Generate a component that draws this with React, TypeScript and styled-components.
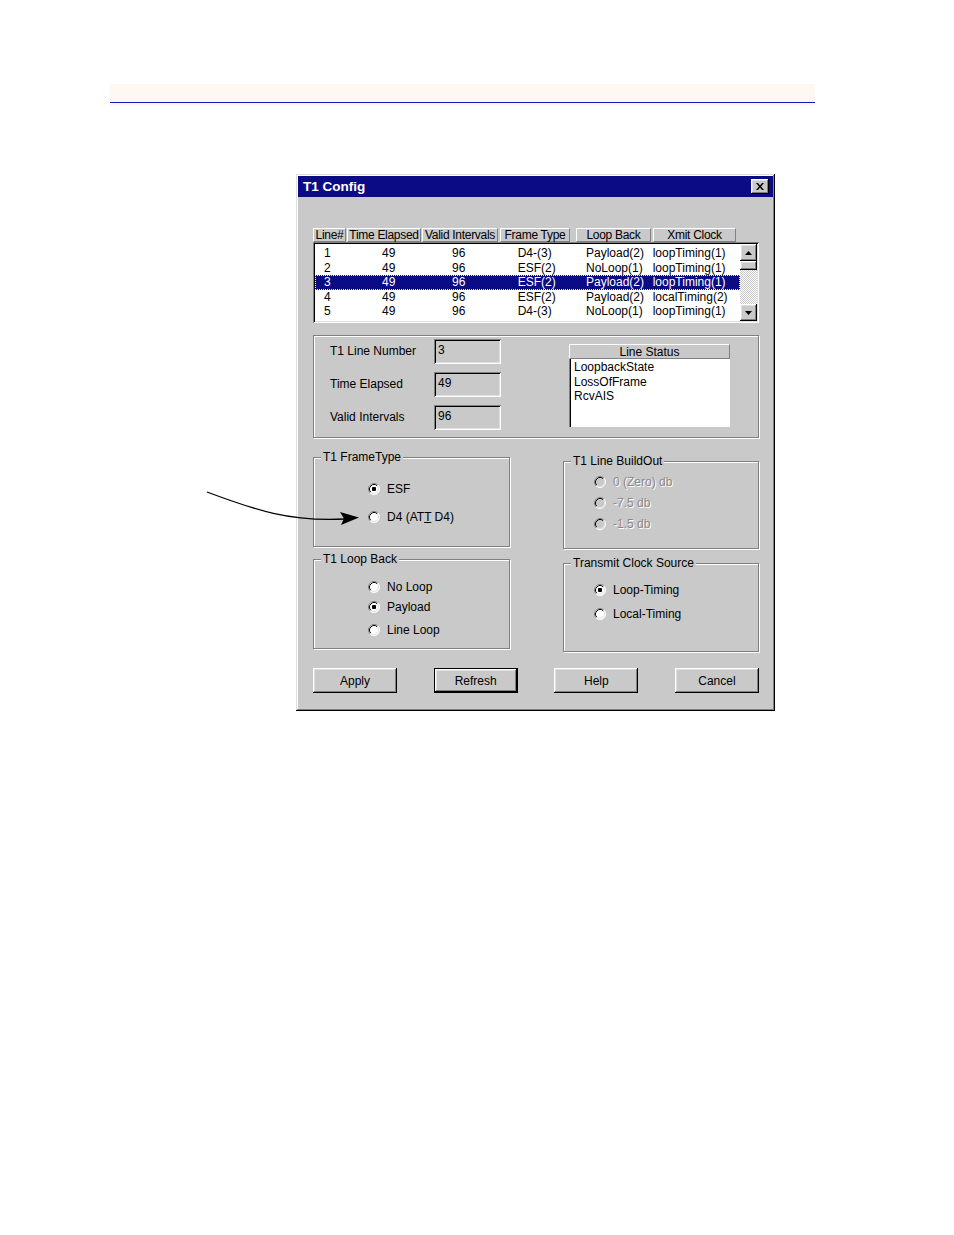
import React from "react";
import styled, { createGlobalStyle, css } from "styled-components";

const GRAY = "#c9c9c9";
const NAVY = "#0b0b86";

const Global = createGlobalStyle`
  html, body { margin: 0; padding: 0; background: #fff; }
  body { font-family: "Liberation Sans", Arial, sans-serif; font-size: 12px; color: #000; }
  * { box-sizing: border-box; }
`;

const raised = css`
  box-shadow: inset -1px -1px 0 #000, inset 1px 1px 0 #fff,
    inset -2px -2px 0 #808080, inset 2px 2px 0 #dfdfdf;
`;
const sunken = css`
  box-shadow: inset 1px 1px 0 #808080, inset -1px -1px 0 #fff,
    inset 2px 2px 0 #000, inset -2px -2px 0 #dfdfdf;
`;
const etched = css`
  border: 1px solid #808080;
  box-shadow: 1px 1px 0 #fff, inset 1px 1px 0 #fff;
`;
const thinRaised = css`
  border-top: 1px solid #fff;
  border-left: 1px solid #fff;
  border-right: 1px solid #808080;
  border-bottom: 1px solid #808080;
`;

const Page = styled.div`
  position: relative;
  width: 954px;
  min-height: 1235px;
  padding-top: 84px;
  display: flex;
  flex-direction: column;
`;

const Band = styled.div`
  margin-left: 110px;
  width: 705px;
  height: 22px;
  background: #fdf8f2;
  padding-top: 18px;
`;

const BandLine = styled.div`
  height: 1px;
  background: #1414c8;
`;

const Dialog = styled.div`
  margin-top: 68px;
  margin-left: 296px;
  width: 479px;
  padding: 2px;
  background: ${GRAY};
  box-shadow: inset -1px -1px 0 #000, inset 1px 1px 0 #dfdfdf,
    inset -2px -2px 0 #808080, inset 2px 2px 0 #fff;
  display: flex;
  flex-direction: column;
`;

const TitleBar = styled.div`
  height: 21px;
  background: ${NAVY};
  display: flex;
  align-items: center;
  justify-content: space-between;
  padding: 0 4px 0 5px;
  color: #fff;
  font-weight: bold;
  font-size: 13.5px;
`;

const CloseBtn = styled.div`
  width: 18px;
  height: 15px;
  background: ${GRAY};
  ${raised};
  display: flex;
  align-items: center;
  justify-content: center;
  padding-bottom: 1px;
`;

const Body = styled.div`
  padding: 31px 14px 16px 15px;
  display: flex;
  flex-direction: column;
`;

const ListHeader = styled.div`
  display: flex;
  height: 14px;
`;

const HeaderCell = styled.div<{ $w: number; $ml: number }>`
  width: ${(p) => p.$w}px;
  margin-left: ${(p) => p.$ml}px;
  ${thinRaised};
  text-align: center;
  line-height: 12px;
  letter-spacing: -0.3px;
  white-space: nowrap;
  display: flex;
  justify-content: center;
`;

const ListBox = styled.div`
  height: 81px;
  display: flex;
  padding: 2px;
  background: #fff;
  ${sunken};
`;

const Rows = styled.div`
  flex: 1;
  overflow: hidden;
  padding-top: 2px;
`;

const Row = styled.div<{ $sel?: boolean }>`
  display: grid;
  grid-template-columns: 58px 70px 65.7px 68.3px 66.7px 1fr;
  height: 14.6px;
  line-height: 14.6px;
  padding-left: 9px;
  white-space: nowrap;
  ${(p) =>
    p.$sel &&
    css`
      background: ${NAVY};
      color: #fff;
      outline: 1px dotted #ffff90;
      outline-offset: -1px;
    `}
`;

const Scrollbar = styled.div`
  width: 17px;
  display: flex;
  flex-direction: column;
`;

const ScrollBtn = styled.div`
  height: 17px;
  background: ${GRAY};
  ${raised};
  display: flex;
  align-items: center;
  justify-content: center;
`;

const Thumb = styled.div`
  height: 9px;
  background: ${GRAY};
  ${raised};
`;

const Track = styled.div`
  flex: 1;
  background: repeating-conic-gradient(#fff 0 25%, ${GRAY} 0 50%) 0 0 / 2px 2px;
`;

const InfoPanel = styled.div`
  margin-top: 12px;
  height: 103px;
  ${etched};
  display: flex;
  align-items: flex-start;
  padding: 3px 28px 0 16px;
`;

const FormGrid = styled.div`
  display: grid;
  grid-template-columns: 104px 67px;
  row-gap: 8px;
  align-items: center;
`;

const Label = styled.div`
  white-space: nowrap;
  margin-top: -2px;
`;

const Field = styled.div`
  height: 25px;
  background: ${GRAY};
  ${sunken};
  padding: 4px 4px 0;
  line-height: 14px;
`;

const LineStatus = styled.div`
  margin-left: auto;
  margin-top: 5px;
  width: 161px;
  height: 83px;
  display: flex;
  flex-direction: column;
`;

const StatusHead = styled.div`
  height: 15px;
  background: ${GRAY};
  ${thinRaised};
  text-align: center;
  line-height: 15px;
`;

const StatusList = styled.div`
  flex: 1;
  background: #fff;
  box-shadow: inset 1px 0 0 #808080, inset 2px 0 0 #000, inset -1px -1px 0 #fff;
  padding: 1px 0 0 5px;
  line-height: 14.5px;
`;

const GroupGrid = styled.div`
  margin-top: 19px;
  display: grid;
  grid-template-columns: 197px 196px;
  column-gap: 53px;
`;

const Column = styled.div<{ $pt: number; $gap: number }>`
  display: flex;
  flex-direction: column;
  padding-top: ${(p) => p.$pt}px;
  gap: ${(p) => p.$gap}px;
`;

const Group = styled.div<{ $h: number; $pl: number }>`
  position: relative;
  height: ${(p) => p.$h}px;
  ${etched};
  display: flex;
  flex-direction: column;
  padding-left: ${(p) => p.$pl}px;
`;

const Legend = styled.div`
  position: absolute;
  top: -8px;
  left: 7px;
  padding: 0 2px;
  background: ${GRAY};
  line-height: 14px;
  white-space: nowrap;
`;

const Option = styled.div<{ $mt: number }>`
  display: flex;
  align-items: center;
  gap: 7px;
  height: 14px;
  margin-top: ${(p) => p.$mt}px;
  white-space: nowrap;
`;

const OptText = styled.span<{ $disabled?: boolean }>`
  ${(p) =>
    p.$disabled &&
    css`
      color: #8a8a8a;
      text-shadow: 1px 1px 0 #fff;
    `}
`;

const ButtonRow = styled.div`
  margin-top: 16px;
  display: flex;
  justify-content: space-between;
`;

const Button = styled.div<{ $def?: boolean }>`
  width: 84px;
  height: 25px;
  background: ${GRAY};
  display: flex;
  align-items: center;
  justify-content: center;
  ${raised};
  ${(p) =>
    p.$def &&
    css`
      border: 1px solid #000;
    `}
`;

const ArrowSvg = styled.svg`
  position: absolute;
  left: 200px;
  top: 485px;
  width: 165px;
  height: 45px;
  overflow: visible;
`;

const Radio: React.FC<{ checked?: boolean; disabled?: boolean }> = ({ checked, disabled }) => (
  <svg width="12" height="12" viewBox="0 0 12 12">
    <circle cx="6" cy="6" r="5.5" fill={disabled ? GRAY : "#fff"} />
    <path d="M2.11 9.89 A5.5 5.5 0 0 1 9.89 2.11" fill="none" stroke="#808080" strokeWidth="1" />
    <path d="M9.89 2.11 A5.5 5.5 0 0 1 2.11 9.89" fill="none" stroke="#fff" strokeWidth="1" />
    <path d="M2.82 9.18 A4.5 4.5 0 0 1 9.18 2.82" fill="none" stroke="#000" strokeWidth="1" />
    <path d="M9.18 2.82 A4.5 4.5 0 0 1 2.82 9.18" fill="none" stroke="#dfdfdf" strokeWidth="1" />
    {checked && <rect x="4" y="4" width="4" height="4" rx="1" fill="#000" />}
  </svg>
);

const rows = [
  ["1", "49", "96", "D4-(3)", "Payload(2)", "loopTiming(1)"],
  ["2", "49", "96", "ESF(2)", "NoLoop(1)", "loopTiming(1)"],
  ["3", "49", "96", "ESF(2)", "Payload(2)", "loopTiming(1)"],
  ["4", "49", "96", "ESF(2)", "Payload(2)", "localTiming(2)"],
  ["5", "49", "96", "D4-(3)", "NoLoop(1)", "loopTiming(1)"],
  ["6", "49", "96", "ESF(2)", "NoLoop(1)", "loopTiming(1)"],
];

const headers: [string, number, number][] = [
  ["Line#", 33, 0],
  ["Time Elapsed", 74, 1],
  ["Valid Intervals", 76, 1],
  ["Frame Type", 70, 2],
  ["Loop Back", 75, 6],
  ["Xmit Clock", 83, 2],
];

export default function App() {
  return (
    <Page>
      <Global />
      <Band>
        <BandLine />
      </Band>

      <Dialog>
        <TitleBar>
          <span>T1 Config</span>
          <CloseBtn>
            <svg width="8" height="7" viewBox="0 0 8 7">
              <path d="M0 0 H2 L4 2.5 L6 0 H8 L5 3.5 L8 7 H6 L4 4.5 L2 7 H0 L3 3.5 Z" fill="#000" />
            </svg>
          </CloseBtn>
        </TitleBar>

        <Body>
          <ListHeader>
            {headers.map(([t, w, ml]) => (
              <HeaderCell key={t} $w={w} $ml={ml}>
                {t}
              </HeaderCell>
            ))}
          </ListHeader>
          <ListBox>
            <Rows>
              {rows.map((r, i) => (
                <Row key={i} $sel={i === 2}>
                  {r.map((c, j) => (
                    <span key={j}>{c}</span>
                  ))}
                </Row>
              ))}
            </Rows>
            <Scrollbar>
              <ScrollBtn>
                <svg width="7" height="4" viewBox="0 0 7 4">
                  <polygon points="3.5,0 7,4 0,4" fill="#000" />
                </svg>
              </ScrollBtn>
              <Thumb />
              <Track />
              <ScrollBtn>
                <svg width="7" height="4" viewBox="0 0 7 4">
                  <polygon points="0,0 7,0 3.5,4" fill="#000" />
                </svg>
              </ScrollBtn>
            </Scrollbar>
          </ListBox>

          <InfoPanel>
            <FormGrid>
              <Label>T1 Line Number</Label>
              <Field>3</Field>
              <Label>Time Elapsed</Label>
              <Field>49</Field>
              <Label>Valid Intervals</Label>
              <Field>96</Field>
            </FormGrid>
            <LineStatus>
              <StatusHead>Line Status</StatusHead>
              <StatusList>
                <div>LoopbackState</div>
                <div>LossOfFrame</div>
                <div>RcvAIS</div>
              </StatusList>
            </LineStatus>
          </InfoPanel>

          <GroupGrid>
            <Column $pt={0} $gap={12}>
              <Group $h={90} $pl={54}>
                <Legend>T1 FrameType</Legend>
                <Option $mt={24}>
                  <Radio checked />
                  <OptText>ESF</OptText>
                </Option>
                <Option $mt={14}>
                  <Radio />
                  <OptText>
                    D4 (AT<u>T</u> D4)
                  </OptText>
                </Option>
              </Group>
              <Group $h={90} $pl={54}>
                <Legend>T1 Loop Back</Legend>
                <Option $mt={20}>
                  <Radio />
                  <OptText>No Loop</OptText>
                </Option>
                <Option $mt={6}>
                  <Radio checked />
                  <OptText>Payload</OptText>
                </Option>
                <Option $mt={9}>
                  <Radio />
                  <OptText>Line Loop</OptText>
                </Option>
              </Group>
            </Column>
            <Column $pt={4} $gap={14}>
              <Group $h={88} $pl={30}>
                <Legend>T1 Line BuildOut</Legend>
                <Option $mt={13}>
                  <Radio disabled />
                  <OptText $disabled>0 (Zero) db</OptText>
                </Option>
                <Option $mt={7}>
                  <Radio disabled />
                  <OptText $disabled>-7.5 db</OptText>
                </Option>
                <Option $mt={7}>
                  <Radio disabled />
                  <OptText $disabled>-1.5 db</OptText>
                </Option>
              </Group>
              <Group $h={89} $pl={30}>
                <Legend>Transmit Clock Source</Legend>
                <Option $mt={19}>
                  <Radio checked />
                  <OptText>Loop-Timing</OptText>
                </Option>
                <Option $mt={10}>
                  <Radio />
                  <OptText>Local-Timing</OptText>
                </Option>
              </Group>
            </Column>
          </GroupGrid>

          <ButtonRow>
            <Button>Apply</Button>
            <Button $def>Refresh</Button>
            <Button>Help</Button>
            <Button>Cancel</Button>
          </ButtonRow>
        </Body>
      </Dialog>

      <ArrowSvg viewBox="200 485 165 45">
        <path d="M207 492 C 255 510, 290 522, 345 519" fill="none" stroke="#000" strokeWidth="1.3" />
        <polygon points="359,517.5 340,512 344,518.5 341,525" fill="#000" />
      </ArrowSvg>
    </Page>
  );
}
